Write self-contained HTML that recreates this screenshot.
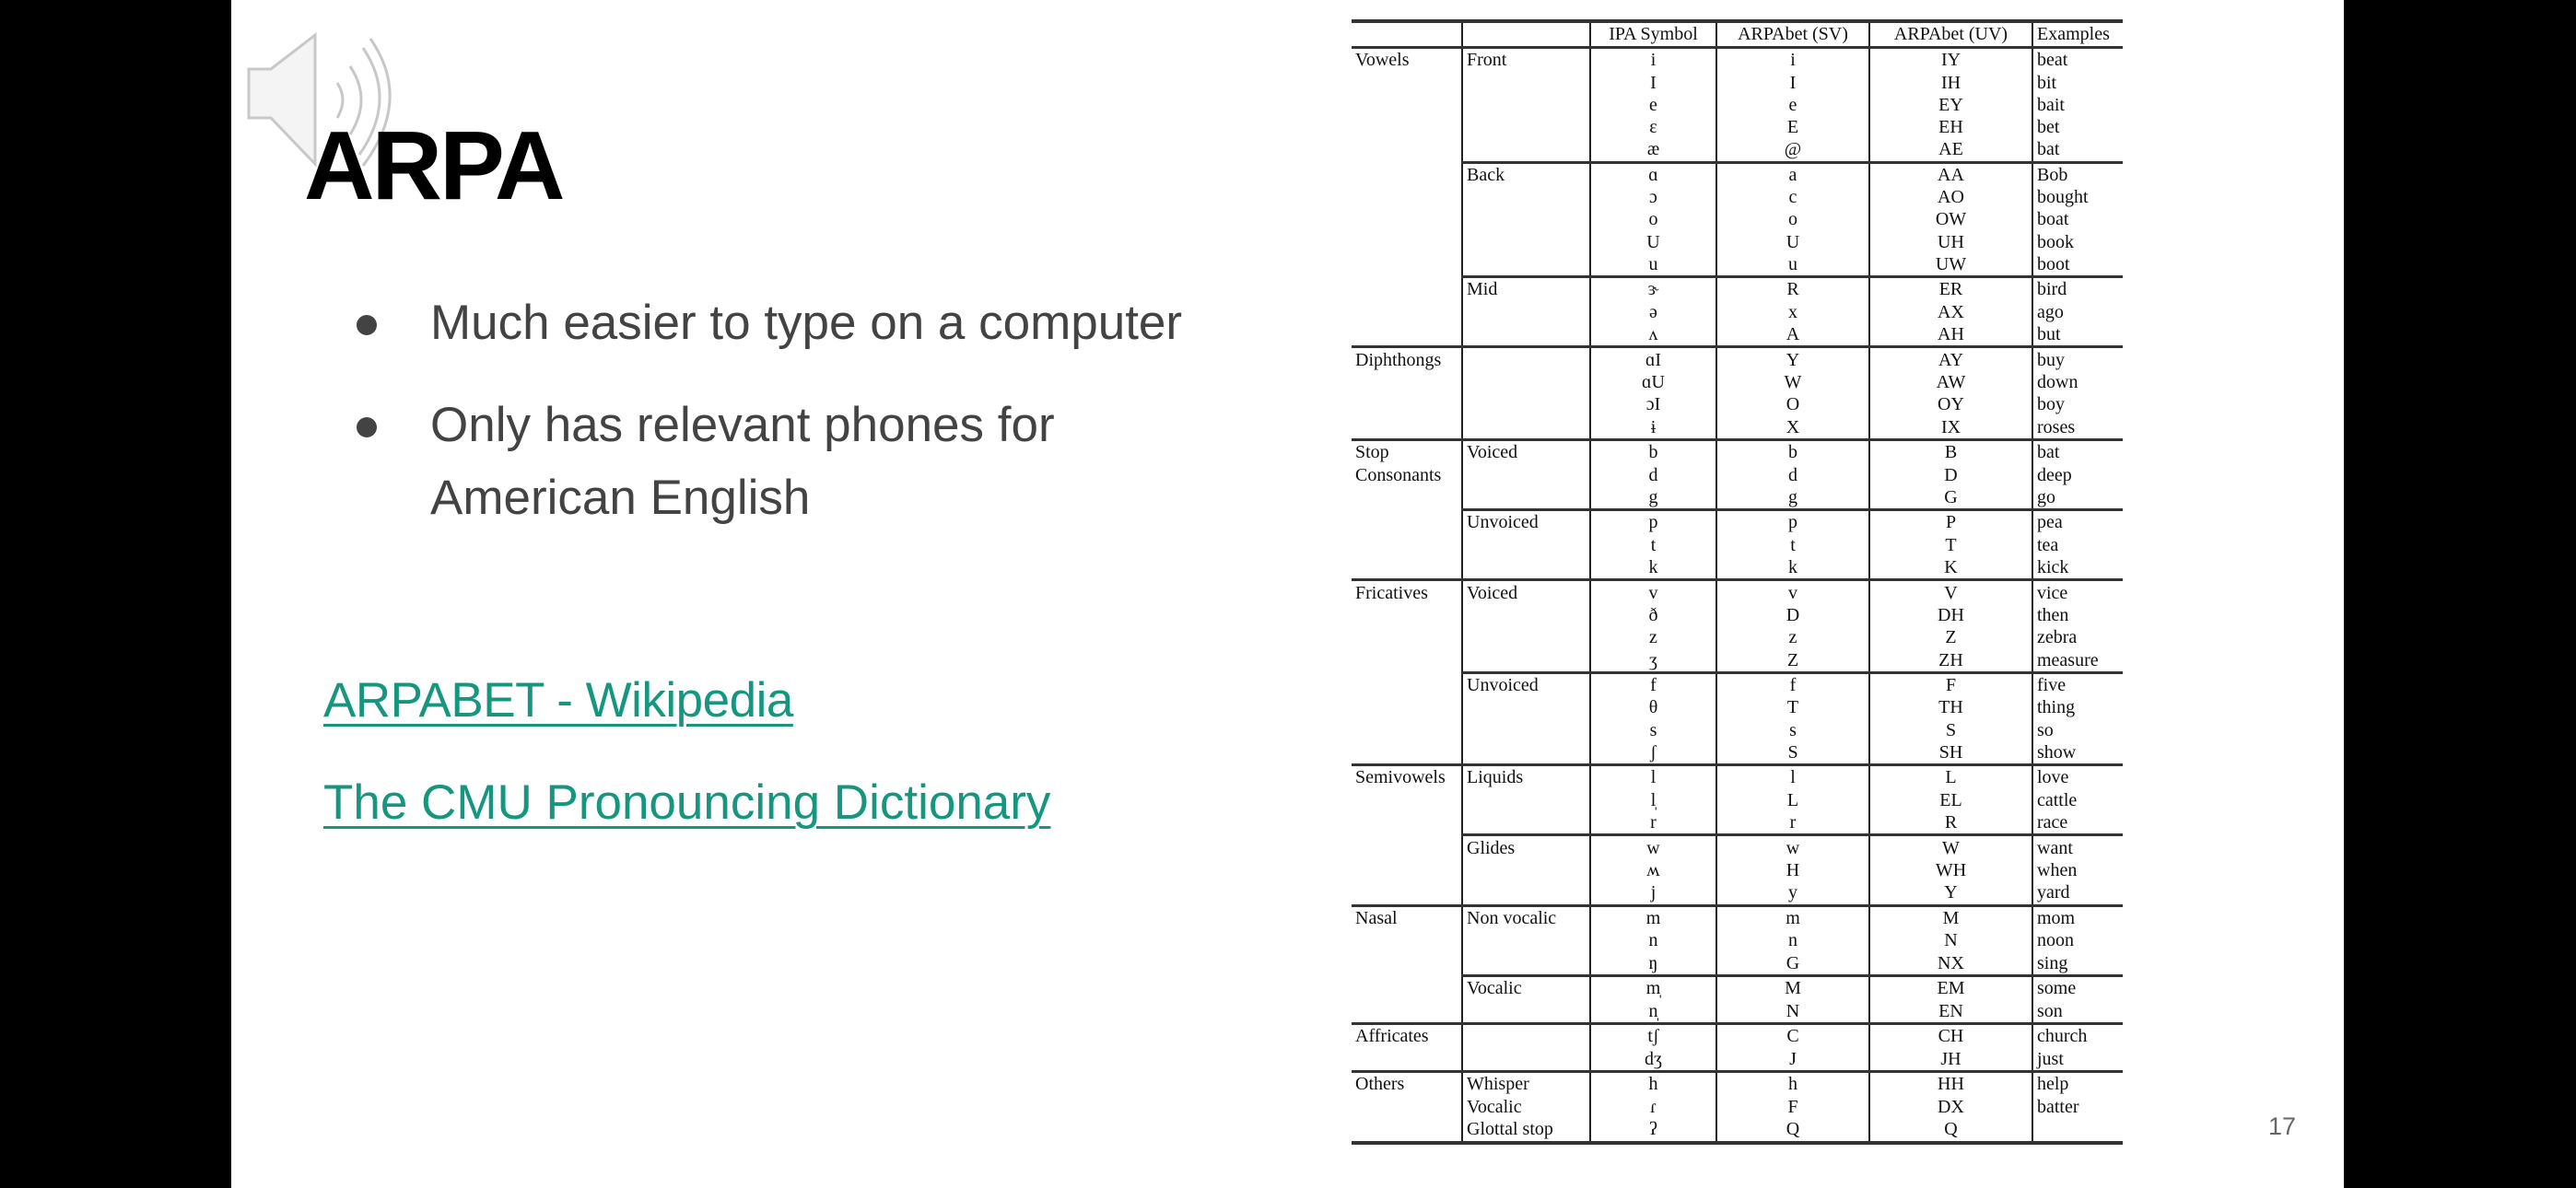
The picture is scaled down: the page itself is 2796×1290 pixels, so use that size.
<!DOCTYPE html>
<html><head><meta charset="utf-8"><style>
body{margin:0;width:2796px;height:1290px;background:#000;position:relative;overflow:hidden;font-family:"Liberation Sans",sans-serif}
#slide{position:absolute;left:251px;top:0;width:2293px;height:1290px;background:#fff}
.a{position:absolute;white-space:nowrap}
.t{font-weight:bold;font-size:106px;left:330px;top:120px;color:#000;letter-spacing:-3px}
.b{font-size:53px;color:#434343;left:467px}
.dot{position:absolute;width:22px;height:22px;border-radius:50%;background:#434343;left:387px}
.lk{font-size:53px;color:#16967f;text-decoration:underline;text-decoration-thickness:3px;text-underline-offset:8px;left:351px}
table{position:absolute;left:1467px;top:21px;width:837px;height:1222px;table-layout:fixed;border-collapse:collapse;font-family:"Liberation Serif",serif;font-size:20px;color:#111;border-top:4px solid #333;border-bottom:4px solid #333}
td{height:1px;padding:0 4px;line-height:20px;white-space:nowrap;vertical-align:middle;overflow:hidden}
td.c{text-align:center}
td:nth-child(n+2){border-left:2px solid #222}
tr.g td{border-top:3px solid #333}
tr.s td:nth-child(n+2){border-top:3px solid #333}
col.c1{width:120px}col.c2{width:139px}col.c3{width:137px}col.c4{width:166px}col.c5{width:177px}col.c6{width:98px}
</style></head><body>
<div id="slide"></div>
<svg class="a" style="left:262px;top:30px" width="190" height="160" viewBox="0 0 190 160" fill="none" stroke="#c8c8c8" stroke-width="3">
<path d="M8 45 H32 L80 8 V148 L32 98 H8 Z" fill="#f4f4f4"/>
<path d="M104 60 Q116 78 104 98"/>
<path d="M118 42 Q142 78 118 116"/>
<path d="M132 22 Q170 78 128 138"/>
<path d="M140 12 Q186 78 132 150"/>
</svg>
<div class="a t">ARPA</div>
<div class="dot" style="top:342px"></div>
<div class="a b" style="top:320px">Much easier to type on a computer</div>
<div class="dot" style="top:453px"></div>
<div class="a b" style="top:431px">Only has relevant phones for</div>
<div class="a b" style="top:510px">American English</div>
<div class="a lk" style="top:730px;letter-spacing:-0.5px">ARPABET - Wikipedia</div>
<div class="a lk" style="top:841px">The CMU Pronouncing Dictionary</div>
<div class="a" style="left:2462px;top:1208px;font-size:27px;color:#666">17</div>
<table>
<colgroup><col class="c1"><col class="c2"><col class="c3"><col class="c4"><col class="c5"><col class="c6"></colgroup>
<tr><td></td><td></td><td class="c">IPA Symbol</td><td class="c">ARPAbet (SV)</td><td class="c">ARPAbet (UV)</td><td>Examples</td></tr>
<tr class="g"><td>Vowels</td><td>Front</td><td class="c">i</td><td class="c">i</td><td class="c">IY</td><td>beat</td></tr>
<tr><td></td><td></td><td class="c">I</td><td class="c">I</td><td class="c">IH</td><td>bit</td></tr>
<tr><td></td><td></td><td class="c">e</td><td class="c">e</td><td class="c">EY</td><td>bait</td></tr>
<tr><td></td><td></td><td class="c">ɛ</td><td class="c">E</td><td class="c">EH</td><td>bet</td></tr>
<tr><td></td><td></td><td class="c">æ</td><td class="c">@</td><td class="c">AE</td><td>bat</td></tr>
<tr class="s"><td></td><td>Back</td><td class="c">ɑ</td><td class="c">a</td><td class="c">AA</td><td>Bob</td></tr>
<tr><td></td><td></td><td class="c">ɔ</td><td class="c">c</td><td class="c">AO</td><td>bought</td></tr>
<tr><td></td><td></td><td class="c">o</td><td class="c">o</td><td class="c">OW</td><td>boat</td></tr>
<tr><td></td><td></td><td class="c">U</td><td class="c">U</td><td class="c">UH</td><td>book</td></tr>
<tr><td></td><td></td><td class="c">u</td><td class="c">u</td><td class="c">UW</td><td>boot</td></tr>
<tr class="s"><td></td><td>Mid</td><td class="c">ɝ</td><td class="c">R</td><td class="c">ER</td><td>bird</td></tr>
<tr><td></td><td></td><td class="c">ə</td><td class="c">x</td><td class="c">AX</td><td>ago</td></tr>
<tr><td></td><td></td><td class="c">ʌ</td><td class="c">A</td><td class="c">AH</td><td>but</td></tr>
<tr class="g"><td>Diphthongs</td><td></td><td class="c">ɑI</td><td class="c">Y</td><td class="c">AY</td><td>buy</td></tr>
<tr><td></td><td></td><td class="c">ɑU</td><td class="c">W</td><td class="c">AW</td><td>down</td></tr>
<tr><td></td><td></td><td class="c">ɔI</td><td class="c">O</td><td class="c">OY</td><td>boy</td></tr>
<tr><td></td><td></td><td class="c">ɨ</td><td class="c">X</td><td class="c">IX</td><td>roses</td></tr>
<tr class="g"><td>Stop</td><td>Voiced</td><td class="c">b</td><td class="c">b</td><td class="c">B</td><td>bat</td></tr>
<tr><td>Consonants</td><td></td><td class="c">d</td><td class="c">d</td><td class="c">D</td><td>deep</td></tr>
<tr><td></td><td></td><td class="c">g</td><td class="c">g</td><td class="c">G</td><td>go</td></tr>
<tr class="s"><td></td><td>Unvoiced</td><td class="c">p</td><td class="c">p</td><td class="c">P</td><td>pea</td></tr>
<tr><td></td><td></td><td class="c">t</td><td class="c">t</td><td class="c">T</td><td>tea</td></tr>
<tr><td></td><td></td><td class="c">k</td><td class="c">k</td><td class="c">K</td><td>kick</td></tr>
<tr class="g"><td>Fricatives</td><td>Voiced</td><td class="c">v</td><td class="c">v</td><td class="c">V</td><td>vice</td></tr>
<tr><td></td><td></td><td class="c">ð</td><td class="c">D</td><td class="c">DH</td><td>then</td></tr>
<tr><td></td><td></td><td class="c">z</td><td class="c">z</td><td class="c">Z</td><td>zebra</td></tr>
<tr><td></td><td></td><td class="c">ʒ</td><td class="c">Z</td><td class="c">ZH</td><td>measure</td></tr>
<tr class="s"><td></td><td>Unvoiced</td><td class="c">f</td><td class="c">f</td><td class="c">F</td><td>five</td></tr>
<tr><td></td><td></td><td class="c">θ</td><td class="c">T</td><td class="c">TH</td><td>thing</td></tr>
<tr><td></td><td></td><td class="c">s</td><td class="c">s</td><td class="c">S</td><td>so</td></tr>
<tr><td></td><td></td><td class="c">ʃ</td><td class="c">S</td><td class="c">SH</td><td>show</td></tr>
<tr class="g"><td>Semivowels</td><td>Liquids</td><td class="c">l</td><td class="c">l</td><td class="c">L</td><td>love</td></tr>
<tr><td></td><td></td><td class="c">l̩</td><td class="c">L</td><td class="c">EL</td><td>cattle</td></tr>
<tr><td></td><td></td><td class="c">r</td><td class="c">r</td><td class="c">R</td><td>race</td></tr>
<tr class="s"><td></td><td>Glides</td><td class="c">w</td><td class="c">w</td><td class="c">W</td><td>want</td></tr>
<tr><td></td><td></td><td class="c">ʍ</td><td class="c">H</td><td class="c">WH</td><td>when</td></tr>
<tr><td></td><td></td><td class="c">j</td><td class="c">y</td><td class="c">Y</td><td>yard</td></tr>
<tr class="g"><td>Nasal</td><td>Non vocalic</td><td class="c">m</td><td class="c">m</td><td class="c">M</td><td>mom</td></tr>
<tr><td></td><td></td><td class="c">n</td><td class="c">n</td><td class="c">N</td><td>noon</td></tr>
<tr><td></td><td></td><td class="c">ŋ</td><td class="c">G</td><td class="c">NX</td><td>sing</td></tr>
<tr class="s"><td></td><td>Vocalic</td><td class="c">m̩</td><td class="c">M</td><td class="c">EM</td><td>some</td></tr>
<tr><td></td><td></td><td class="c">n̩</td><td class="c">N</td><td class="c">EN</td><td>son</td></tr>
<tr class="g"><td>Affricates</td><td></td><td class="c">tʃ</td><td class="c">C</td><td class="c">CH</td><td>church</td></tr>
<tr><td></td><td></td><td class="c">dʒ</td><td class="c">J</td><td class="c">JH</td><td>just</td></tr>
<tr class="g"><td>Others</td><td>Whisper</td><td class="c">h</td><td class="c">h</td><td class="c">HH</td><td>help</td></tr>
<tr><td></td><td>Vocalic</td><td class="c">ɾ</td><td class="c">F</td><td class="c">DX</td><td>batter</td></tr>
<tr><td></td><td>Glottal stop</td><td class="c">ʔ</td><td class="c">Q</td><td class="c">Q</td><td></td></tr>
</table>
</body></html>
